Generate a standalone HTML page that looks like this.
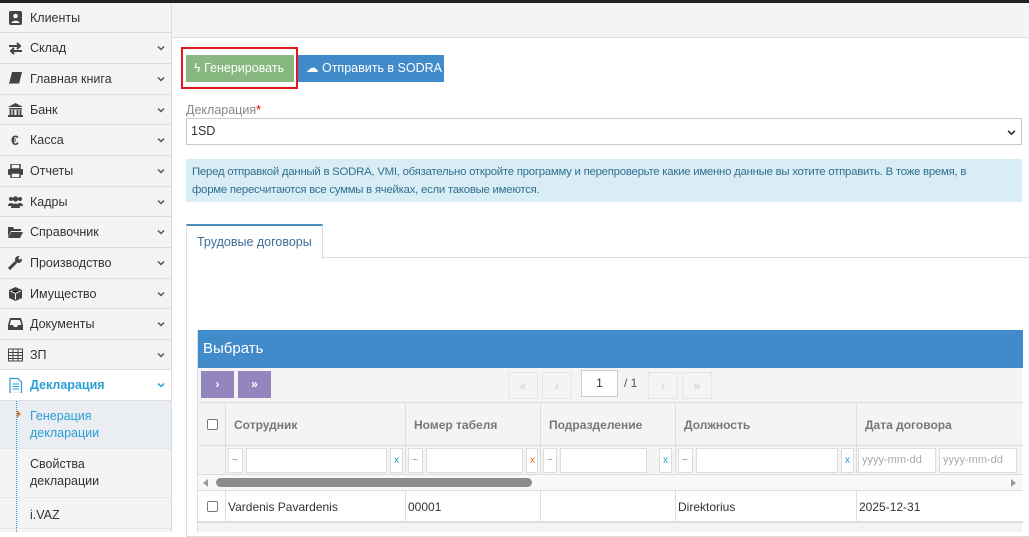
<!DOCTYPE html>
<html><head><meta charset="utf-8"><style>
*{box-sizing:border-box;margin:0;padding:0}
body{width:1029px;height:532px;overflow:hidden;background:#fff;font-family:"Liberation Sans",sans-serif;font-size:12px;color:#333;position:relative}
.a{position:absolute}
.top{left:0;top:0;width:1029px;height:3px;background:#222}
.side{left:0;top:3px;width:172px;height:529px;background:#f4f4f4;border-right:1px solid #ddd}
.mi{position:absolute;left:0;width:171px;height:31px;border-bottom:1px solid #ddd;font-size:12.5px;color:#333;line-height:30px;padding-left:30px}
.mi .ic{position:absolute;left:8px;top:8px;width:15px;height:14px}
.ch{position:absolute;right:6px;top:12px;width:8px;height:6px}
.sub{position:absolute;left:0;width:171px;font-size:12.5px;line-height:17px;padding:7px 0 0 30px;border-bottom:1px dotted #ddd}
.hdr{left:172px;top:3px;width:857px;height:35px;background:#f4f4f4;border-bottom:1px solid #ddd}
.th{position:absolute;top:0;height:44px;line-height:44px;border-left:1px solid #ddd;font-weight:bold;color:#777;font-size:12px;padding-left:8px}
.fi{position:absolute;top:2px;height:25px;background:#fff;border:1px solid #ddd;font-size:10px;color:#888;line-height:23px;padding-left:3px}
.cell{position:absolute;top:0;height:32px;line-height:32px;border-left:1px solid #ddd;font-size:12px;padding-left:2px}
.pg{position:absolute;top:4px;width:30px;height:27px;border:1px solid #e6e6e6;color:#ccc;text-align:center;line-height:26px;font-size:12px}
</style></head><body>
<svg width="0" height="0" style="position:absolute"><defs><symbol id="cv" viewBox="0 0 8 6"><path d="M1 1.5l3 3 3-3" stroke="currentColor" stroke-width="1.5" fill="none"/></symbol></defs></svg>
<div class="a top"></div>
<div class="a side"></div>
<div class="mi" style="top:3px;height:30px"><svg class="ic" viewBox="0 0 15 14"><rect x="1" y="0" width="13" height="14" rx="2" fill="#444"/><circle cx="7.5" cy="5" r="2.3" fill="#f4f4f4"/><path d="M3.5 12c0-3 8-3 8 0z" fill="#f4f4f4"/></svg>Клиенты</div>
<div class="mi" style="top:33px"><svg class="ic" viewBox="0 0 15 14"><path d="M1 5h11M9 2l3 3-3 3M14 10H3M6 7l-3 3 3 3" stroke="#444" stroke-width="2" fill="none"/></svg>Склад<svg class="ch" style="color:#555"><use href="#cv"/></svg></div>
<div class="mi" style="top:64px"><svg class="ic" viewBox="0 0 15 14"><path d="M4 0h10l-3 12H1z" fill="#444"/><path d="M2 12h9" stroke="#f4f4f4"/></svg>Главная книга<svg class="ch" style="color:#555"><use href="#cv"/></svg></div>
<div class="mi" style="top:95px;height:30px"><svg class="ic" viewBox="0 0 15 14"><path d="M7.5 0L15 4H0z" fill="#444"/><rect x="1" y="5" width="13" height="1.5" fill="#444"/><path d="M2.5 7v5M5.5 7v5M9.5 7v5M12.5 7v5" stroke="#444" stroke-width="1.8"/><rect x="0" y="12" width="15" height="2" fill="#444"/></svg>Банк<svg class="ch" style="color:#555"><use href="#cv"/></svg></div>
<div class="mi" style="top:125px"><span class="a" style="left:11px;top:0;font-weight:bold;font-size:14px;color:#444">€</span>Касса<svg class="ch" style="color:#555"><use href="#cv"/></svg></div>
<div class="mi" style="top:156px"><svg class="ic" viewBox="0 0 15 14"><rect x="3" y="0" width="9" height="5" fill="none" stroke="#444" stroke-width="1.5"/><rect x="0" y="5" width="15" height="6" rx="1" fill="#444"/><rect x="3" y="9" width="9" height="5" fill="#f4f4f4" stroke="#444" stroke-width="1.5"/></svg>Отчеты<svg class="ch" style="color:#555"><use href="#cv"/></svg></div>
<div class="mi" style="top:187px;height:30px"><svg class="ic" viewBox="0 0 15 14"><circle cx="3" cy="4" r="2" fill="#444"/><circle cx="12" cy="4" r="2" fill="#444"/><circle cx="7.5" cy="4" r="2.7" fill="#444"/><path d="M0 11c0-4 6-4 6 0zM9 11c0-4 6-4 6 0zM3 13c0-6 9-6 9 0z" fill="#444"/></svg>Кадры<svg class="ch" style="color:#555"><use href="#cv"/></svg></div>
<div class="mi" style="top:217px"><svg class="ic" viewBox="0 0 15 14"><path d="M0 2h5l1 2h7v2H3L0 12z" fill="#444"/><path d="M3 7h12l-3 6H0z" fill="#444"/></svg>Справочник<svg class="ch" style="color:#555"><use href="#cv"/></svg></div>
<div class="mi" style="top:248px"><svg class="ic" viewBox="0 0 15 14"><path d="M1 13l7-7" stroke="#444" stroke-width="3"/><circle cx="10.5" cy="3.5" r="3.5" fill="#444"/><circle cx="12" cy="2" r="1.5" fill="#f4f4f4"/></svg>Производство<svg class="ch" style="color:#555"><use href="#cv"/></svg></div>
<div class="mi" style="top:279px;height:30px"><svg class="ic" viewBox="0 0 15 14"><path d="M7.5 0L14 3v8l-6.5 3L1 11V3z" fill="#444"/><path d="M2.5 4l5 2.5 5-2.5M7.5 6.5v6" stroke="#f4f4f4" stroke-width="1"/></svg>Имущество<svg class="ch" style="color:#555"><use href="#cv"/></svg></div>
<div class="mi" style="top:309px"><svg class="ic" viewBox="0 0 15 14"><path d="M2 1h11l2 7v5H0V8z" fill="#444"/><path d="M3 3h9l1.3 5H10l-1 2H6L5 8H1.7z" fill="#f4f4f4"/></svg>Документы<svg class="ch" style="color:#555"><use href="#cv"/></svg></div>
<div class="mi" style="top:340px;height:30px"><svg class="ic" viewBox="0 0 15 14"><rect x="0.5" y="1" width="14" height="12" fill="none" stroke="#444"/><path d="M0.5 4.5h14M0.5 7.5h14M0.5 10.5h14M5 1v12M10 1v12" stroke="#444"/></svg>ЗП<svg class="ch" style="color:#555"><use href="#cv"/></svg></div>
<div class="mi" style="top:370px;background:#fff;color:#2a9fd6;font-weight:bold"><svg class="ic" viewBox="0 0 15 14" style="top:7px;height:16px"><path d="M2 0.5h8l3.5 3.5v11.5H2z" fill="none" stroke="#2a9fd6" stroke-width="1.2"/><path d="M4.5 6h6.5M4.5 8.5h6.5M4.5 11h6.5" stroke="#2a9fd6"/></svg>Декларация<svg class="ch" style="color:#2a9fd6"><use href="#cv"/></svg></div>
<div class="sub" style="top:401px;height:48px;background:#eaedf1;color:#2a9fd6">Генерация<br>декларации<span class="a" style="left:17px;top:9px;width:0;height:0;border-left:4px solid #e8741c;border-top:4px solid transparent;border-bottom:4px solid transparent"></span></div>
<div class="sub" style="top:449px;height:49px">Свойства<br>декларации</div>
<div class="sub" style="top:498px;height:31px;padding-top:9px">i.VAZ</div>
<div class="a" style="left:16px;top:401px;height:131px;border-left:1px dotted #2a9fd6"></div>

<div class="a hdr"></div>
<div class="a" style="left:181px;top:47px;width:117px;height:42px;border:2px solid #e3161c"></div>
<div class="a" style="left:186px;top:55px;width:108px;height:27px;background:#87b87f;color:#fff;font-size:12.5px;line-height:27px;padding-left:8px">ϟ Генерировать</div>
<div class="a" style="left:298px;top:55px;width:146px;height:27px;background:#428bca;color:#fff;font-size:12.5px;line-height:27px;padding-left:8px">☁ Отправить в SODRA</div>
<div class="a" style="left:186px;top:103px;font-size:12.5px;color:#888">Декларация<span style="color:#d00">*</span></div>
<div class="a" style="left:186px;top:118px;width:836px;height:27px;border:1px solid #ccc;font-size:12.5px;line-height:25px;padding-left:4px;color:#333">1SD<svg class="a" style="right:5px;top:10px;width:9px;height:7px;color:#333"><use href="#cv"/></svg></div>
<div class="a" style="left:186px;top:159px;width:836px;height:43px;background:#d9edf7;color:#31708f;font-size:11.4px;line-height:18px;padding:4px 0 0 6px;letter-spacing:-0.25px">Перед отправкой данный в SODRA, VMI, обязательно откройте программу и перепроверьте какие именно данные вы хотите отправить. В тоже время, в<br>форме пересчитаются все суммы в ячейках, если таковые имеются.</div>
<div class="a" style="left:186px;top:224px;width:137px;height:35px;background:#fff;border:1px solid #ddd;border-top:2px solid #4c8fbd;border-bottom:none;color:#3d6d96;font-size:12.5px;line-height:32px;padding-left:10px;z-index:2">Трудовые договоры</div>
<div class="a" style="left:186px;top:257px;width:850px;height:280px;border:1px solid #ddd"></div>

<div class="a" style="left:197px;top:330px;width:825px;height:202px;background:#f4f4f4;border-left:1px solid #ddd">
<div class="a" style="left:0;top:0;width:825px;height:38px;background:#428bca;color:#fff;font-size:15px;line-height:38px;padding-left:5px">Выбрать</div>
<div class="a" style="left:3px;top:41px;width:33px;height:27px;background:#9585bf;color:#fff;text-align:center;line-height:26px;font-weight:bold">›</div>
<div class="a" style="left:40px;top:41px;width:33px;height:27px;background:#9585bf;color:#fff;text-align:center;line-height:26px;font-weight:bold">»</div>
<div class="a" style="left:0;top:38px;width:825px;height:34px">
<div class="pg" style="left:310px">«</div><div class="pg" style="left:344px">‹</div>
<div class="a" style="left:383px;top:2px;width:37px;height:27px;background:#fff;border:1px solid #ccc;text-align:center;line-height:25px;font-size:12px;color:#333">1</div>
<div class="a" style="left:426px;top:8px;font-size:12px;color:#555">/ 1</div>
<div class="pg" style="left:450px">›</div><div class="pg" style="left:484px">»</div>
</div>
<div class="a" style="left:0;top:72px;width:825px;height:44px;border-top:1px solid #ddd;border-bottom:1px solid #ddd">
<span class="a" style="left:9px;top:16px;width:11px;height:11px;border:1px solid #777;border-radius:2px;background:#fff"></span>
<div class="th" style="left:27px;width:180px">Сотрудник</div>
<div class="th" style="left:207px;width:135px">Номер табеля</div>
<div class="th" style="left:342px;width:135px">Подразделение</div>
<div class="th" style="left:477px;width:181px">Должность</div>
<div class="th" style="left:658px;width:170px">Дата договора</div>
</div>
<div class="a" style="left:0;top:116px;width:825px;height:29px;border-bottom:1px solid #ddd">
<div class="a" style="left:27px;top:0;height:29px;border-left:1px solid #ddd"></div>
<div class="fi" style="left:30px;width:15px">~</div><div class="fi" style="left:48px;width:141px"></div><div class="fi" style="left:192px;width:13px;color:#2a9fd6">x</div>
<div class="a" style="left:207px;top:0;height:29px;border-left:1px solid #ddd"></div>
<div class="fi" style="left:210px;width:15px">~</div><div class="fi" style="left:228px;width:97px"></div><div class="fi" style="left:328px;width:12px;color:#e8741c">x</div>
<div class="a" style="left:342px;top:0;height:29px;border-left:1px solid #ddd"></div>
<div class="fi" style="left:345px;width:14px">~</div><div class="fi" style="left:362px;width:87px"></div><div class="fi" style="left:461px;width:13px;color:#2a9fd6">x</div>
<div class="a" style="left:477px;top:0;height:29px;border-left:1px solid #ddd"></div>
<div class="fi" style="left:480px;width:15px">~</div><div class="fi" style="left:498px;width:142px"></div><div class="fi" style="left:643px;width:13px;color:#2a9fd6">x</div>
<div class="a" style="left:658px;top:0;height:29px;border-left:1px solid #ddd"></div>
<div class="fi" style="left:660px;width:78px;font-size:11px;color:#aaa">yyyy-mm-dd</div><div class="fi" style="left:741px;width:78px;font-size:11px;color:#aaa">yyyy-mm-dd</div>
</div>
<div class="a" style="left:0;top:145px;width:825px;height:16px;background:#f8f8f8;border-bottom:1px solid #ddd">
<span class="a" style="left:5px;top:4px;border-right:5px solid #999;border-top:4px solid transparent;border-bottom:4px solid transparent"></span>
<span class="a" style="left:18px;top:3px;width:316px;height:9px;border-radius:5px;background:#8c8c8c"></span>
<span class="a" style="left:813px;top:4px;border-left:5px solid #999;border-top:4px solid transparent;border-bottom:4px solid transparent"></span>
</div>
<div class="a" style="left:0;top:161px;width:825px;height:32px;background:#fff;border-bottom:2px solid #ddd">
<span class="a" style="left:9px;top:10px;width:11px;height:11px;border:1px solid #777;border-radius:2px"></span>
<div class="cell" style="left:27px">Vardenis Pavardenis</div>
<div class="cell" style="left:207px">00001</div>
<div class="cell" style="left:342px"></div>
<div class="cell" style="left:477px">Direktorius</div>
<div class="cell" style="left:658px">2025-12-31</div>
</div>
</div>
</body></html>
